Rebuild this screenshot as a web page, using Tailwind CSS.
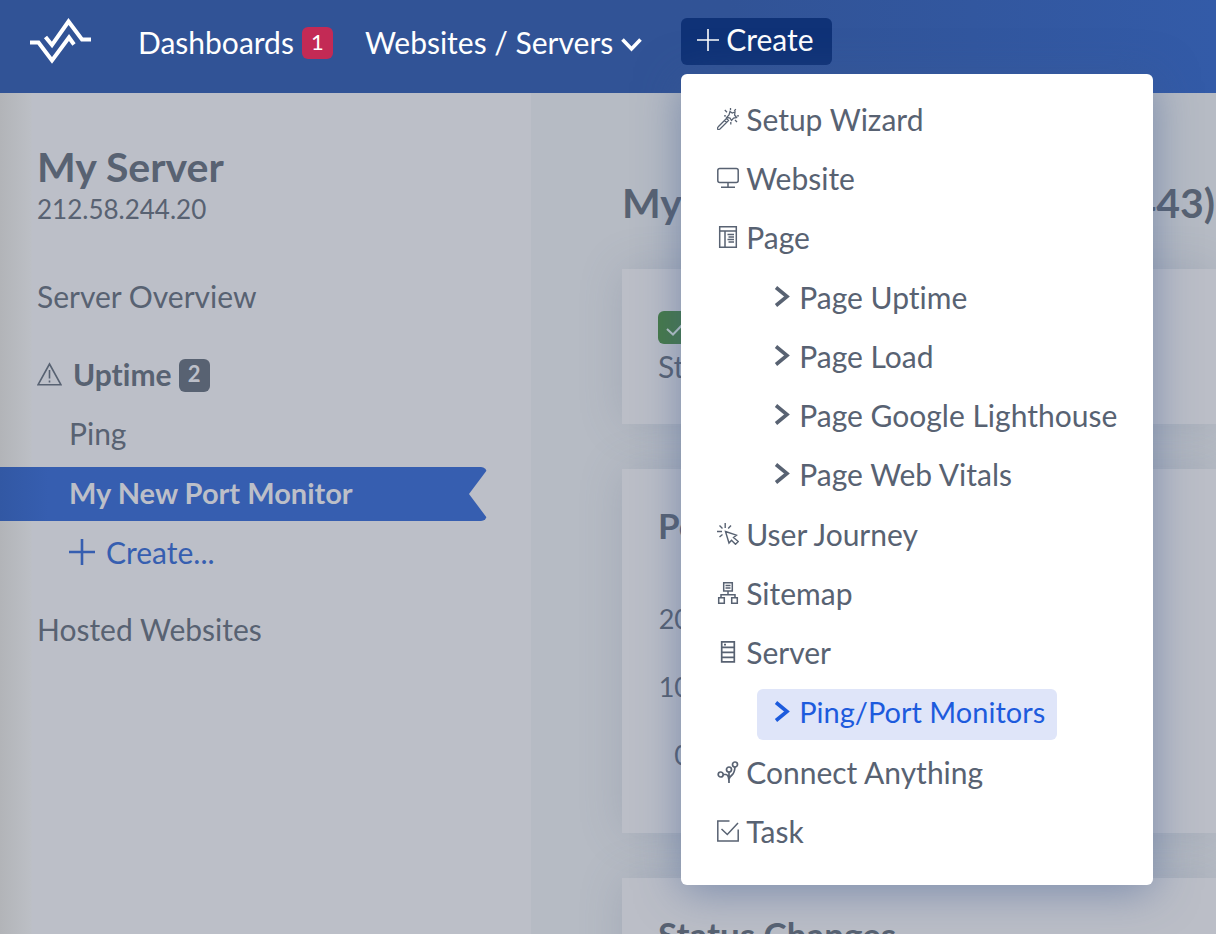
<!DOCTYPE html>
<html lang="en">
<head>
<meta charset="utf-8">
<meta name="viewport" content="width=device-width, initial-scale=1">
<title>My Server</title>
<script src="https://cdn.jsdelivr.net/npm/@tailwindcss/browser@4"></script>
</head>
<body class="flex h-screen flex-col overflow-hidden bg-[#b6bbc4] font-[Lato,sans-serif] text-[30px] leading-9 text-[#586272] [font-variant-ligatures:none]">

<header class="relative z-10 flex h-[93px] shrink-0 items-start bg-linear-to-r from-[#315396] from-60% to-[#335ba8] pl-[29px] text-white">
  <a href="#" aria-label="Home" class="mt-[18px] mr-[47px] block">
    <svg class="h-[46px] w-[62px]" viewBox="0 0 62 46" fill="none" stroke="currentColor" stroke-width="4"><path d="M1 24.500H9.500L23 42.500L40 19.500L45 26.500M16.500 19L23 27L39.500 3.500L53 21.500H62"/></svg>
  </a>
  <nav aria-label="Main" class="mt-6 flex items-center">
    <a href="#" class="mr-8 flex items-center gap-2">Dashboards <span class="mt-0.5 flex h-8 w-[31px] items-center justify-center rounded-md bg-[#c32a55] pb-0.5 text-[22px] leading-7">1</span></a>
    <button type="button" class="mr-[39px] flex items-center gap-2">Websites / Servers
      <svg class="mt-1.5 h-4 w-[21px]" viewBox="0 0 21 16" fill="none" stroke="currentColor" stroke-width="3.600"><path d="M1.500 2.500L10.500 12L19.500 2.500"/></svg>
    </button>
  </nav>
  <div class="relative mt-[18px]">
    <button type="button" aria-expanded="true" class="flex h-[47px] w-[151px] items-center gap-[7px] rounded-md bg-[#0f3277] pb-[5px] pl-4">
      <svg class="mt-0.5 h-[22px] w-[22px]" viewBox="0 0 22 22" fill="none" stroke="currentColor" stroke-width="1.600"><path d="M11 0V22M0 11H22"/></svg>Create
    </button>
    <ul class="absolute top-14 left-0 flex w-[472px] flex-col gap-2 rounded-md bg-white px-9 pt-[22px] pb-[26px] text-[#586272] shadow-[0_6px_44px_rgba(60,90,145,0.5)]">
      <li><a href="#" class="flex h-[51px] items-center gap-[7px] pb-[5px]"><svg class="h-[22px] w-[22px]" viewBox="0 0 22 22" fill="none" stroke="currentColor" stroke-width="1.300"><path d="M1 19L9.500 10.500L11.500 12.500L3 21Q1.500 22 .8 21.200T1 19M7.500 12.500L9.500 14.500M13 3.500L15.200 5L18 4L17.600 7L19.500 9.500L16.600 10L14.500 12.500L13 10L9.800 9.300L12 7ZM13.500 0V2.200M18.800 1.200L17.300 3M19.800 7.800H22M18 12L20 14M13.800 14V16.500M7 7.800H9M7.800 2L10 4.200"/></svg>Setup Wizard</a></li>
      <li><a href="#" class="flex h-[51px] items-center gap-[7px] pb-[5px]"><svg class="h-[22px] w-[22px]" viewBox="0 0 22 22" fill="none" stroke="currentColor" stroke-width="1.500"><rect x=".8" y="1.500" width="20.400" height="14" rx="2"/><path d="M11 15.500V20.300M4 20.300H18"/></svg>Website</a></li>
      <li><a href="#" class="flex h-[51px] items-center gap-[7px] pb-[5px]"><svg class="h-[22px] w-[22px]" viewBox="0 0 22 22" fill="none" stroke="currentColor" stroke-width="1.500"><path d="M2.700.8H19.300V21.200H2.700ZM2.700 5H19.300M8 5V21M10.500 8.500H17M11.500 11H17M10.500 13.500H17M11.500 16H17"/></svg>Page</a>
        <ul class="mt-2 ml-10 flex flex-col gap-2 py-px">
          <li><a href="#" class="flex h-[51px] w-fit items-center gap-2 rounded-md px-4 pb-[5px]"><svg class="h-[22px] w-[18px]" viewBox="0 0 18 22" fill="none" stroke="currentColor" stroke-width="3.600"><path d="M3 1.500L14 10.500L3 19.500"/></svg>Page Uptime</a></li>
          <li><a href="#" class="flex h-[51px] w-fit items-center gap-2 rounded-md px-4 pb-[5px]"><svg class="h-[22px] w-[18px]" viewBox="0 0 18 22" fill="none" stroke="currentColor" stroke-width="3.600"><path d="M3 1.500L14 10.500L3 19.500"/></svg>Page Load</a></li>
          <li><a href="#" class="flex h-[51px] w-fit items-center gap-2 rounded-md px-4 pb-[5px] whitespace-nowrap"><svg class="h-[22px] w-[18px]" viewBox="0 0 18 22" fill="none" stroke="currentColor" stroke-width="3.600"><path d="M3 1.500L14 10.500L3 19.500"/></svg>Page Google Lighthouse</a></li>
          <li><a href="#" class="flex h-[51px] w-fit items-center gap-2 rounded-md px-4 pb-[5px]"><svg class="h-[22px] w-[18px]" viewBox="0 0 18 22" fill="none" stroke="currentColor" stroke-width="3.600"><path d="M3 1.500L14 10.500L3 19.500"/></svg>Page Web Vitals</a></li>
        </ul>
      </li>
      <li><a href="#" class="flex h-[51px] items-center gap-[7px] pb-[5px]"><svg class="h-[22px] w-[22px]" viewBox="0 0 22 22" fill="none" stroke="currentColor" stroke-width="1.400"><path d="M8.500 8.500L19.500 12.200L16.500 14.500L21.300 18.500L18.500 21.300L14.500 17.200L12 20ZM8.200 0V5M2.500 2.500L5.500 5.500M0 8.500H5M2.500 14L5.500 11.500M11.200 5.500L14 2.500"/></svg>User Journey</a></li>
      <li><a href="#" class="flex h-[51px] items-center gap-[7px] pb-[5px]"><svg class="h-[22px] w-[22px]" viewBox="0 0 22 22" fill="none" stroke="currentColor" stroke-width="1.500"><path d="M6.700.8H15.300V9H6.700ZM8.500 3.500H13.500M8.500 6H13.500M11 9V12.700M4 15.500V12.700H18V15.500M1.700 15.700H7.300V21.200H1.700ZM14.700 15.700H20.300V21.200H14.700Z"/></svg>Sitemap</a></li>
      <li><a href="#" class="flex h-[51px] items-center gap-[7px] pb-[5px]"><svg class="h-[22px] w-[22px]" viewBox="0 0 22 22" fill="none" stroke="currentColor" stroke-width="1.700"><path d="M4.700.9H17.300V20.800H4.700ZM4.700 6.300H17.300M4.700 11.300H17.300M4.700 16.300H17.300M7 3.700H9"/></svg>Server</a>
        <ul class="mt-2 ml-10 flex flex-col gap-2 py-px">
          <li><a href="#" aria-current="page" class="flex h-[51px] w-fit items-center gap-2 rounded-md bg-[#dfe5f9] pr-3 pb-[5px] pl-4 text-[29px] text-[#1d5bdd]"><svg class="h-[22px] w-[18px]" viewBox="0 0 18 22" fill="none" stroke="currentColor" stroke-width="3.600"><path d="M3 1.500L14 10.500L3 19.500"/></svg>Ping/Port Monitors</a></li>
        </ul>
      </li>
      <li><a href="#" class="flex h-[51px] items-center gap-[7px] pb-[5px]"><svg class="h-[22px] w-[22px]" viewBox="0 0 22 22" fill="none" stroke="currentColor" stroke-width="1.700"><circle cx="3.700" cy="13.500" r="2.500"/><circle cx="12" cy="8.500" r="2.500"/><circle cx="18" cy="3.500" r="2.500"/><path d="M6.300 13.500H9Q12 14 12 22V11M12 18Q12.500 16 15 14T18 6"/></svg>Connect Anything</a></li>
      <li><a href="#" class="flex h-[51px] items-center gap-[7px] pb-[5px]"><svg class="h-[22px] w-[22px]" viewBox="0 0 22 22" fill="none" stroke="currentColor" stroke-width="1.500"><path d="M12.500.9H.8V21.100H21.200V9.500M4.500 9L10.300 14.500L21 3"/></svg>Task</a></li>
    </ul>
  </div>
</header>

<div class="flex min-h-0 flex-1">
  <aside class="w-[531px] shrink-0 bg-[linear-gradient(to_right,#b2b4b8,#bcbfc5_31px,#bcbfc8_32px)] pt-[49px]">
    <h1 class="pl-[37px] text-[41px] leading-[50px] font-bold">My Server</h1>
    <p class="mt-px pl-[37px] text-[26px] leading-8">212.58.244.20</p>
    <nav aria-label="Server" class="mt-[45px] flex flex-col">
      <a href="#" class="flex h-[54px] items-center pb-0.5 pl-[37px]">Server Overview</a>
      <a href="#" class="mt-6 flex h-[54px] items-center pb-0.5 pl-[37px] font-bold">
        <svg class="mr-[11px] h-[25px] w-[25px]" viewBox="0 0 25 25" fill="none" stroke="currentColor" stroke-width="1.600"><path d="M12.500 2L24 22.800H1ZM12.500 8V16.500M12.500 18.500V20.500"/></svg>Uptime
        <span class="mt-0.5 ml-[7px] flex h-[33px] w-[31px] items-center justify-center rounded-md bg-[#586272] pb-0.5 text-[22px] leading-7 text-[#bcbfc8]">2</span>
      </a>
      <a href="#" class="mt-[5px] flex h-[54px] items-center pb-0.5 pl-[69px]">Ping</a>
      <a href="#" aria-current="page" class="mt-1.5 mr-11 flex h-[54px] items-center rounded-r-md bg-linear-to-r from-[#3258a4] to-[#365eb0] to-10% pb-[3px] pl-[69px] text-[29px] font-bold text-[#bcbfc8] [clip-path:polygon(0_0,100%_0,100%_3px,calc(100%-18px)_50%,100%_calc(100%-3px),100%_100%,0_100%)]">My New Port Monitor</a>
      <a href="#" class="mt-[5px] flex h-[54px] items-center gap-[11px] pb-0.5 pl-[69px] text-[#365eb0]">
        <svg class="h-[26px] w-[26px]" viewBox="0 0 26 26" fill="none" stroke="currentColor" stroke-width="2.600"><path d="M13 0V26M0 13H26"/></svg>Create...
      </a>
      <a href="#" class="mt-[23px] flex h-[54px] items-center pb-0.5 pl-[37px]">Hosted Websites</a>
    </nav>
  </aside>

  <main class="min-w-0 flex-1 pt-[85px] pl-[91px]">
    <h2 class="flex justify-between pr-px text-[41px] leading-[50px] font-bold whitespace-nowrap"><span>My Port</span><span>(:443)</span></h2>
    <section class="mt-[41px] h-[155px] bg-[#bbbec7] px-9 pt-[42px] shadow-[0_0_40px_rgba(95,110,135,0.22)]">
      <div class="flex h-[33px] w-[94px] items-center rounded-md bg-[#467a48] pl-2 text-[#bcc9c8]">
        <svg class="h-5 w-5" viewBox="0 0 20 20" fill="none" stroke="currentColor" stroke-width="2"><path d="M1 11L7 16.500L19 4"/></svg>
      </div>
      <p class="mt-1">Status</p>
    </section>
    <section class="mt-[45px] h-[364px] bg-[#bbbec7] px-9 pt-[34px] shadow-[0_0_40px_rgba(95,110,135,0.22)]">
      <h3 class="text-[35px] leading-[44px] font-bold">Port</h3>
      <div class="mt-14 flex w-8 flex-col gap-9 text-right text-[27px] leading-8">
        <span>20</span><span>10</span><span>0</span>
      </div>
    </section>
    <section class="mt-[45px] h-[364px] bg-[#bbbec7] px-9 pt-[34px] shadow-[0_0_40px_rgba(95,110,135,0.22)]">
      <h3 class="text-[35px] leading-[44px] font-bold">Status Changes</h3>
    </section>
  </main>
</div>
</body>
</html>
